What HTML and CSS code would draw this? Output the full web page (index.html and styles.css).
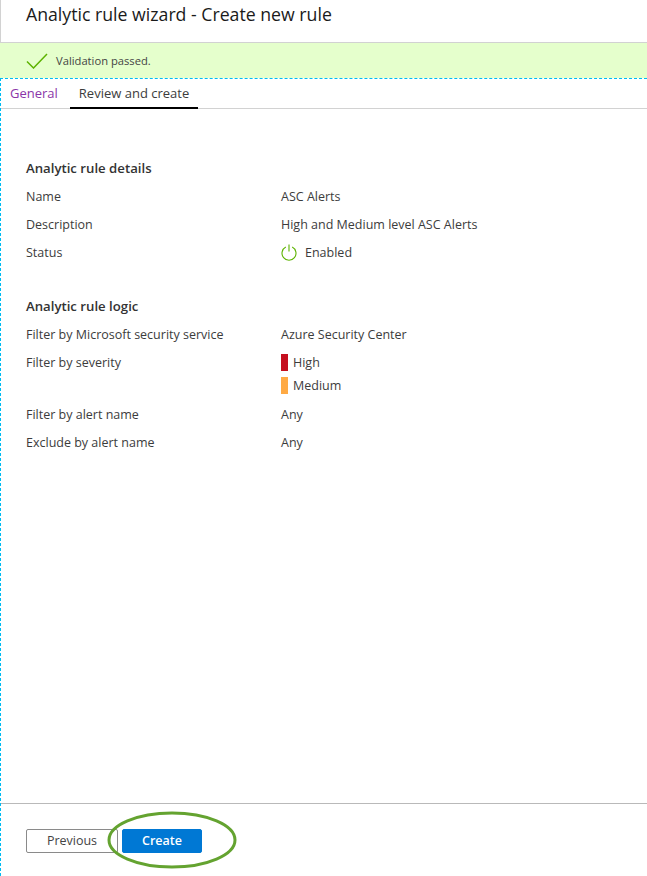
FILE: index.html
```html
<!DOCTYPE html>
<html>
    <head>
        <link rel="stylesheet" href="styles.css">
    </head>
    <body>
        <div class="topbar">Analytic rule wizard - Create new rule</div>
        <div class="banner">
            <svg class="check" width="22" height="16" viewBox="0 0 22 16"><path d="M1 8.500L7.500 15L21 1" fill="none" stroke="#5db300" stroke-width="1.500"/></svg>
            <span>Validation passed.</span>
        </div>
        <div class="wizard">
            <div class="tabs">
                <a class="tab general">General</a>
                <a class="tab active">Review and create</a>
            </div>
            <div class="content">
                <h3>Analytic rule details</h3>
                <div class="row"><div class="key">Name</div><div>ASC Alerts</div></div>
                <div class="row"><div class="key">Description</div><div>High and Medium level ASC Alerts</div></div>
                <div class="row">
                    <div class="key">Status</div>
                    <div class="status">
                        <svg width="16" height="17" viewBox="0 0 16 17"><path d="M4.800 3A7 7 0 1 0 11.200 3M8 0.500V7.500" fill="none" stroke="#5db300" stroke-width="1.100"/></svg>
                        <span>Enabled</span>
                    </div>
                </div>
                <h3 class="second">Analytic rule logic</h3>
                <div class="row"><div class="key">Filter by Microsoft security service</div><div>Azure Security Center</div></div>
                <div class="row severity">
                    <div class="key">Filter by severity</div>
                    <div class="levels">
                        <div class="level"><i class="swatch high"></i>High</div>
                        <div class="level"><i class="swatch medium"></i>Medium</div>
                    </div>
                </div>
                <div class="row"><div class="key">Filter by alert name</div><div>Any</div></div>
                <div class="row"><div class="key">Exclude by alert name</div><div>Any</div></div>
            </div>
            <div class="footer">
                <button class="btn prev">Previous</button>
                <button class="btn create">Create</button>
                <svg class="ring" width="132" height="60" viewBox="0 0 132 60"><ellipse cx="66" cy="30" rx="63" ry="27" fill="none" stroke="#64a330" stroke-width="3"/></svg>
            </div>
        </div>
    </body>
</html>
```

FILE: styles.css
```css
html, body {
    margin: 0;
    height: 100%;
}
body {
    width: 647px;
    height: 876px;
    overflow: hidden;
    display: flex;
    flex-direction: column;
    font-family: "Open Sans", "Noto Sans", sans-serif;
    font-size: 12.500px;
    color: #3c3c3c;
    background: #fff;
}
.topbar {
    height: 42px;
    padding-left: 25px;
    line-height: 28px;
    font-size: 17.700px;
    color: #1a1a1a;
    border-bottom: 1px solid #d2d2d2;
    border-left: 1px solid #d2d2d2;
}
.banner {
    height: 35px;
    display: flex;
    align-items: center;
    padding-left: 26px;
    background: #e5ffcc;
    font-size: 11.200px;
    color: #444;
}
.check {
    margin-right: 8px;
    margin-top: 1px;
}
.wizard {
    flex: 1;
    display: flex;
    flex-direction: column;
    border-top: 1px dashed #00bcf2;
    border-left: 1px dashed #00bcf2;
}
.tabs {
    height: 29px;
    display: flex;
    border-bottom: 1px solid #d2d2d2;
}
.tab {
    line-height: 28px;
    font-size: 13px;
}
.general {
    color: #8a35a8;
    margin-left: 9px;
    margin-right: 12px;
}
.active {
    padding: 0 9px;
    box-sizing: border-box;
    border-bottom: 2px solid #000;
    margin-bottom: -1px;
    height: 30px;
}
.content {
    flex: 1;
    padding: 50px 0 0 25px;
}
h3 {
    margin: 0 0 8px;
    font-size: 13.200px;
    font-weight: 600;
    line-height: 19px;
    color: #333;
}
h3.second {
    margin-top: 27px;
}
.row {
    display: flex;
    min-height: 28px;
    line-height: 21px;
}
.key {
    width: 255px;
}
.status {
    display: flex;
    align-items: center;
    height: 21px;
    gap: 8px;
}
.severity {
    min-height: 52px;
}
.levels {
    margin-top: -1px;
}
.level {
    display: flex;
    align-items: center;
    height: 23px;
}
.swatch {
    width: 7px;
    height: 17px;
    margin-right: 5px;
}
.high {
    background: #c50f1f;
}
.medium {
    background: #ffaa44;
}
.footer {
    position: relative;
    height: 73px;
    border-top: 1px solid #b9b9b9;
    display: flex;
    align-items: flex-start;
    padding: 25px 0 0 25px;
    box-sizing: border-box;
}
.btn {
    height: 24px;
    font-family: inherit;
    font-size: 12.500px;
    border-radius: 2px;
    padding: 0 0 2px;
    width: 92px;
}
.prev {
    background: #fff;
    border: 1px solid #8a8a8a;
    color: #444;
    margin-right: 4px;
}
.create {
    width: 80px;
    background: #0078d4;
    border: 1px solid #0078d4;
    color: #fff;
    font-weight: 600;
}
.ring {
    position: absolute;
    left: 105px;
    top: 6px;
}
```
